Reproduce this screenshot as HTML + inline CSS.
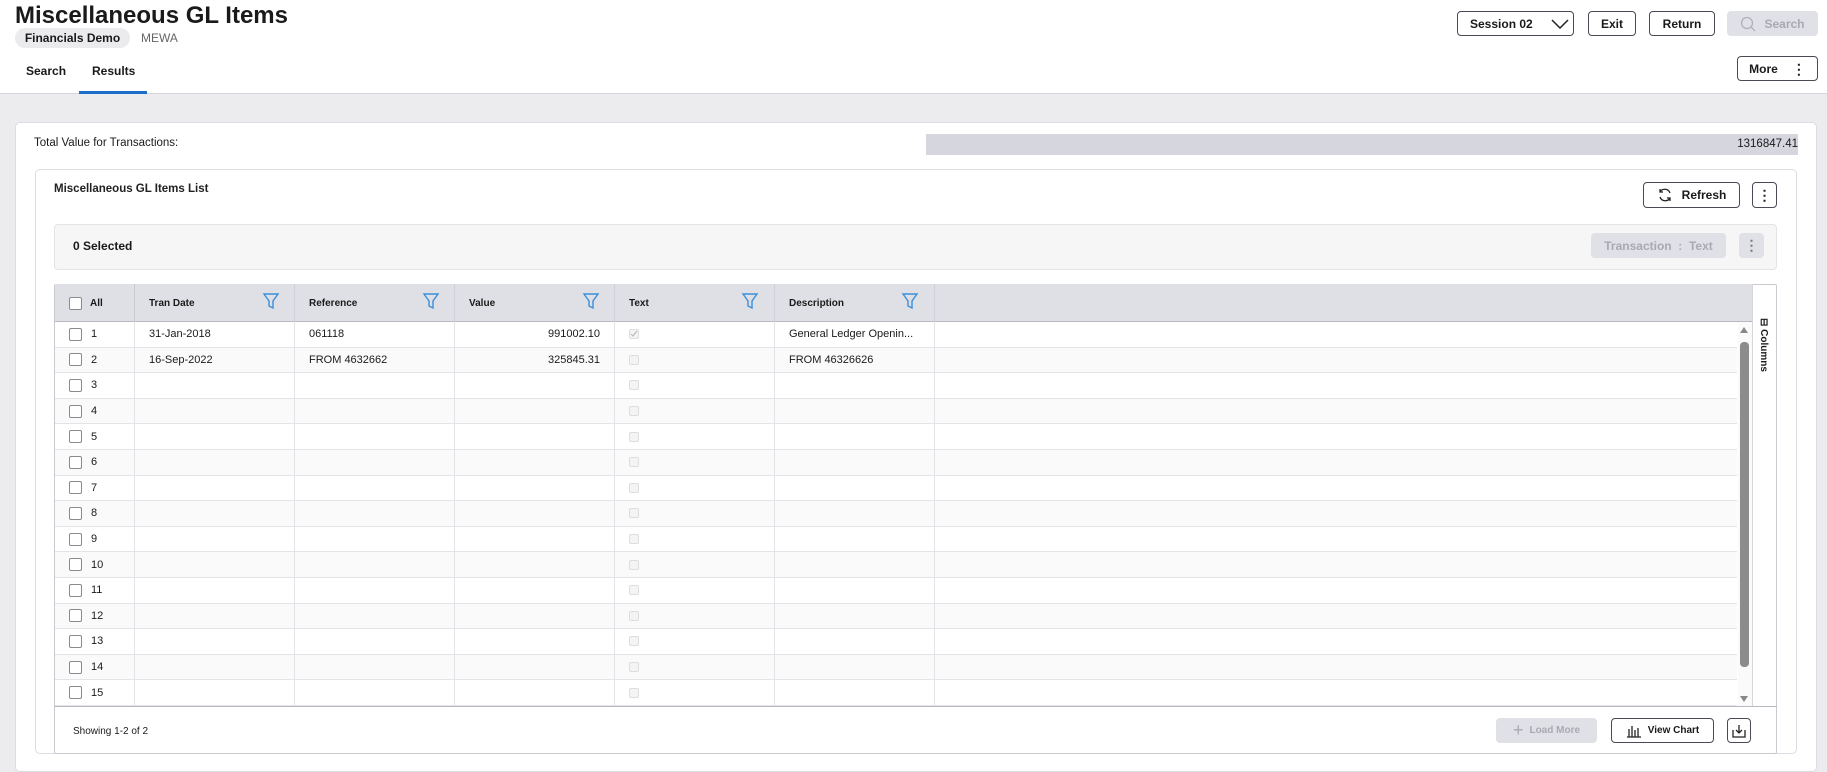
<!DOCTYPE html>
<html><head><meta charset="utf-8"><style>
*{box-sizing:border-box;margin:0;padding:0}
body{width:1827px;height:767px;overflow:hidden;background:#ececef;font-family:"Liberation Sans",sans-serif;color:#1a1a1a;position:relative}
.a{position:absolute}
.hdr{left:0;top:0;width:1827px;height:94px;background:#fff;border-bottom:1px solid #d5d6da}
.btn{position:absolute;border:1px solid #4a4a55;border-radius:4px;background:#fff;font-size:12px;display:flex;align-items:center;justify-content:center;font-weight:bold}
.dis{background:#e0e1e6;border-color:#e0e1e6;color:#a8a9b3}
.row{position:absolute;left:55px;width:1682px;height:25.6px;border-bottom:1px solid #e3e4e8;font-size:11px}
.c{position:absolute;top:0;height:100%;border-right:1px solid #e3e4e8;display:flex;align-items:center}
.cb{width:13px;height:13px;border:1.5px solid #8a8a90;border-radius:2px;background:#fff;display:inline-block}
.cbs{width:10px;height:10px;border:1px solid #ddd;border-radius:2px;background:#f4f4f4;display:inline-block}
.hd{font-size:10px;font-weight:bold}
</style></head><body>
<div class="a hdr"></div>
<div class="a" style="left:15px;top:2px;font-size:24px;font-weight:bold">Miscellaneous GL Items</div>
<div class="a" style="left:15px;top:28px;width:115px;height:20px;border-radius:10px;background:#ebebee;font-size:12px;font-weight:bold;display:flex;align-items:center;justify-content:center">Financials Demo</div>
<div class="a" style="left:141px;top:31px;font-size:12px;color:#666">MEWA</div>
<div class="a" style="left:26px;top:64px;font-size:12px;font-weight:bold">Search</div>
<div class="a" style="left:92px;top:64px;font-size:12px;font-weight:bold">Results</div>
<div class="a" style="left:79px;top:91px;width:68px;height:3px;background:#1b6fc9"></div>
<div class="btn" style="left:1457px;top:11px;width:117px;height:25px;justify-content:flex-start;padding-left:12px">Session 02<svg style="margin-left:18px" width="18" height="10" viewBox="0 0 18 10"><path d="M1 1l8 8 8-8" fill="none" stroke="#222" stroke-width="1.5"/></svg></div>
<div class="btn" style="left:1588px;top:11px;width:48px;height:25px">Exit</div>
<div class="btn" style="left:1649px;top:11px;width:66px;height:25px">Return</div>
<div class="btn dis" style="left:1727px;top:11px;width:91px;height:25px"><svg width="16" height="16" viewBox="0 0 16 16" style="margin-right:8px"><circle cx="7" cy="7" r="5.5" fill="none" stroke="#b0b1ba" stroke-width="1.3"/><path d="M11 11l4 4" stroke="#b0b1ba" stroke-width="1.3"/></svg>Search</div>
<div class="btn" style="left:1737px;top:56px;width:81px;height:25px">More<span style="margin-left:14px;font-size:14px;line-height:1">⋮</span></div>

<div class="a" style="left:15px;top:122px;width:1802px;height:650px;background:#fff;border:1px solid #dcdde2;border-radius:5px"></div>
<div class="a" style="left:34px;top:137px;font-size:11.5px">Total Value for Transactions:</div>
<div class="a" style="left:926px;top:134px;width:872px;height:21px;background:#d5d6de;font-size:11.5px;text-align:right;padding:4px 0 0;">1316847.41</div>
<div class="a" style="left:35px;top:169px;width:1762px;height:585px;border:1px solid #dcdde2;border-radius:5px"></div>
<div class="a" style="left:54px;top:183px;font-size:11.5px;font-weight:bold;color:#222">Miscellaneous GL Items List</div>
<div class="btn" style="left:1643px;top:182px;width:97px;height:26px"><svg width="16" height="16" viewBox="0 0 16 16" style="margin-right:9px"><path d="M13 6A5.5 5.5 0 0 0 3 5M3 10a5.5 5.5 0 0 0 10 1M3 2v3h3M13 14v-3h-3" fill="none" stroke="#222" stroke-width="1.3"/></svg>Refresh</div>
<div class="btn" style="left:1752px;top:182px;width:25px;height:26px;font-size:14px">⋮</div>
<div class="a" style="left:54px;top:224px;width:1723px;height:46px;background:#f6f6f7;border:1px solid #e3e4e8;border-radius:4px"></div>
<div class="a" style="left:73px;top:239px;font-size:12px;font-weight:bold">0 Selected</div>
<div class="btn dis" style="left:1591px;top:233px;width:135px;height:25px">Transaction&nbsp; : &nbsp;Text</div>
<div class="btn dis" style="left:1739px;top:233px;width:25px;height:25px;font-size:14px;color:#777">⋮</div>

<div class="a" style="left:54px;top:284px;width:1723px;height:470px;border:1px solid #c9cad0;border-radius:2px"></div>
<div class="a" style="left:55px;top:284px;width:1697px;height:38px;background:#dfe0e6;border-bottom:1px solid #b8b9c0"></div>
<div class="a" style="left:1752px;top:284px;width:1px;height:422px;background:#d5d6da"></div>
<div class="a" style="left:1755px;top:318px;font-size:10px;font-weight:bold;transform-origin:0 0;transform:rotate(90deg) translate(0,-14px)">⊟ Columns</div>
<div class="a" style="left:1738px;top:322px;width:14px;height:384px;background:#fafafa"></div>
<div class="a" style="left:1740px;top:342px;width:9px;height:325px;background:#8c8c8c;border-radius:4px"></div>
<div class="a" style="left:1740px;top:327px;width:0;height:0;border:4px solid transparent;border-bottom:6px solid #888;border-top:0"></div>
<div class="a" style="left:1740px;top:696px;width:0;height:0;border:4px solid transparent;border-top:6px solid #888;border-bottom:0"></div>

<div class="row" style="top:284px;height:38px;border:none">
<div class="c hd" style="left:0;width:80px;padding-left:14px;border-color:#c9cad0"><span class="cb" style="margin-right:8px"></span>All</div>
<div class="c hd" style="left:80px;width:160px;padding-left:14px;border-color:#d0d1d8">Tran Date</div>
<div class="c hd" style="left:240px;width:160px;padding-left:14px;border-color:#d0d1d8">Reference</div>
<div class="c hd" style="left:400px;width:160px;padding-left:14px;border-color:#d0d1d8">Value</div>
<div class="c hd" style="left:560px;width:160px;padding-left:14px;border-color:#d0d1d8">Text</div>
<div class="c hd" style="left:720px;width:160px;padding-left:14px;border-color:#d0d1d8">Description</div>
</div>
<svg class="a" style="left:0;top:292px" width="1000" height="20">
<g fill="none" stroke="#3a8fd9" stroke-width="1.4">
<path d="M264 2h14l-5 7v7l-4-2v-5z"/><path d="M424 2h14l-5 7v7l-4-2v-5z"/><path d="M584 2h14l-5 7v7l-4-2v-5z"/><path d="M743 2h14l-5 7v7l-4-2v-5z"/><path d="M903 2h14l-5 7v7l-4-2v-5z"/>
</g></svg>

<div id="rows"></div>
<script>
var d=[["31-Jan-2018","061118","991002.10","General Ledger Openin..."],["16-Sep-2022","FROM 4632662","325845.31","FROM 46326626"]];
var h="";
for(var i=0;i<15;i++){var r=d[i]||["","","",""];
h+='<div class="row" style="top:'+(322+i*25.6)+'px;background:'+(i%2?'#fafafa':'#fff')+'">'+
'<div class="c" style="left:0;width:80px;padding-left:14px"><span class="cb" style="margin-right:9px"></span>'+(i+1)+'</div>'+
'<div class="c" style="left:80px;width:160px;padding-left:14px">'+r[0]+'</div>'+
'<div class="c" style="left:240px;width:160px;padding-left:14px">'+r[1]+'</div>'+
'<div class="c" style="left:400px;width:160px;padding-right:14px;justify-content:flex-end">'+r[2]+'</div>'+
'<div class="c" style="left:560px;width:160px;padding-left:14px"><span class="cbs">'+(i==0?'<svg width="8" height="8" viewBox="0 0 8 8" style="display:block"><path d="M1 4l2 2 4-5" fill="none" stroke="#bbb" stroke-width="1.2"/></svg>':'')+'</span></div>'+
'<div class="c" style="left:720px;width:160px;padding-left:14px">'+r[3]+'</div></div>';}
document.getElementById('rows').innerHTML=h;
</script>
<div class="a" style="left:55px;top:706px;width:1722px;height:1px;background:#b8b9c0"></div>
<div class="a" style="left:73px;top:726px;font-size:10px">Showing 1-2 of 2</div>
<div class="btn dis" style="left:1496px;top:718px;width:101px;height:25px;font-size:10px"><span style="font-size:18px;font-weight:normal;margin-right:6px">+</span>Load More</div>
<div class="btn" style="left:1611px;top:718px;width:103px;height:25px;font-size:10px"><svg width="16" height="14" viewBox="0 0 16 14" style="margin-right:6px"><path d="M1 13h14M3 13V5M6 13V2M9 13V6M12 13V4" stroke="#222" stroke-width="1.3" fill="none"/></svg>View Chart</div>
<div class="btn" style="left:1727px;top:718px;width:24px;height:25px"><svg width="14" height="14" viewBox="0 0 14 14"><path d="M1 6v7h12V6M7 1v8M4 6l3 3 3-3" fill="none" stroke="#222" stroke-width="1.3"/></svg></div>
</body></html>
